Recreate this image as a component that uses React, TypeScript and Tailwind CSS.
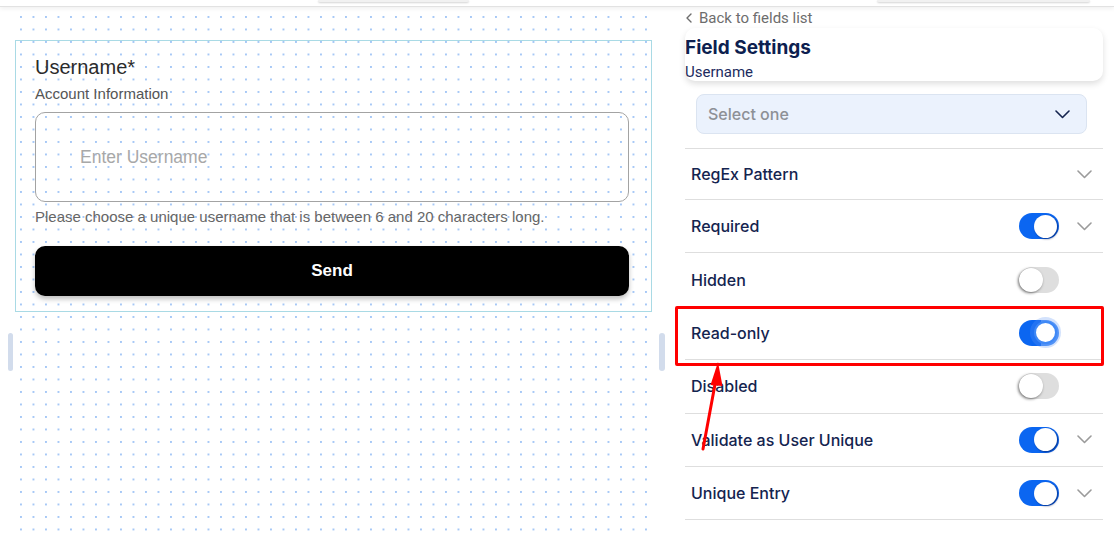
import type { ReactNode } from 'react';

type Row = {
  label: string;
  toggle?: 'on' | 'off' | 'focus';
  chevron?: boolean;
};

const rows: Row[] = [
  { label: 'RegEx Pattern', chevron: true },
  { label: 'Required', toggle: 'on', chevron: true },
  { label: 'Hidden', toggle: 'off' },
  { label: 'Read-only', toggle: 'focus' },
  { label: 'Disabled', toggle: 'off' },
  { label: 'Validate as User Unique', toggle: 'on', chevron: true },
  { label: 'Unique Entry', toggle: 'on', chevron: true },
];

function Chevron(props: { className?: string; color?: string }) {
  return (
    <svg
      width="15"
      height="9"
      viewBox="0 0 15 9"
      fill="none"
      className={props.className}
    >
      <polyline
        points="1,1 7.5,7.5 14,1"
        stroke={props.color ?? '#9b9b9b'}
        strokeWidth="1.6"
        strokeLinecap="round"
        strokeLinejoin="round"
      />
    </svg>
  );
}

function Toggle(props: { state: 'on' | 'off' | 'focus' }) {
  if (props.state === 'off') {
    return (
      <div className="flex h-[26px] w-[40px] items-center rounded-full bg-[#dedede]">
        <div className="h-[24px] w-[24px] rounded-full bg-white shadow-[-1px_1px_3px_rgba(0,0,0,0.55)]" />
      </div>
    );
  }
  if (props.state === 'focus') {
    return (
      <div className="flex h-[26px] w-[40px] items-center justify-end rounded-full bg-[linear-gradient(90deg,#0b66f1_55%,#4b91f7_55%)] pr-[2px]">
        <div className="h-[23px] w-[23px] rounded-full border-2 border-[#3e88f6] bg-white shadow-[0_0_0_4px_rgba(96,150,245,0.28)]" />
      </div>
    );
  }
  return (
    <div className="flex h-[26px] w-[40px] items-center justify-end rounded-full bg-[#0b66f1] pr-[2px]">
      <div className="h-[23px] w-[23px] rounded-full bg-white shadow-[1px_1px_2px_rgba(0,20,80,0.6)]" />
    </div>
  );
}

function SettingRow(props: { row: Row; first?: boolean }) {
  const { row } = props;
  return (
    <div
      className={`flex items-center border-b border-[#dedede] pl-[6px] pr-[11px] ${
        props.first ? 'h-[51px]' : 'h-[53.4px]'
      }`}
    >
      <span className="flex-1 text-[16px] font-medium text-[#14244f] [font-family:Inter,sans-serif]">
        {row.label}
      </span>
      {row.toggle && <Toggle state={row.toggle} />}
      <div className="ml-[18px] flex w-[15px] items-center">
        {row.chevron && <Chevron />}
      </div>
    </div>
  );
}

function TopPill(props: { className: string; children?: ReactNode }) {
  return (
    <div
      className={`h-[2px] rounded-b-[6px] bg-[#f1f1f1] shadow-[0_1px_2px_rgba(0,0,0,0.18)] ${props.className}`}
    >
      {props.children}
    </div>
  );
}

export default function App() {
  return (
    <div className="relative flex h-[541px] w-[1114px] flex-col overflow-hidden bg-white">
      {/* top bar */}
      <div className="relative z-10 flex h-[7px] shrink-0 items-start border-b border-[#e2e2e2] bg-white shadow-[0_2px_4px_rgba(0,0,0,0.06)]">
        <TopPill className="ml-[318px] w-[151px]" />
        <TopPill className="ml-[408px] w-[213px]" />
      </div>

      <div className="flex min-h-0 flex-1">
        {/* canvas */}
        <div className="relative w-[667px] shrink-0 bg-[radial-gradient(circle_at_1px_1px,#a6c8f6_0.8px,transparent_1.3px)] bg-[length:12.5px_12.5px] bg-clip-content bg-origin-content pl-[20px] pr-[17px] pt-[9px] [font-family:'Liberation_Sans',Arial,sans-serif]">
          <div className="-ml-[5px] mt-[24px] w-[637px] border border-[#a9dae5] pb-[15px] pl-[19px] pr-[22px] pt-[13px]">
            <div className="text-[20px] leading-[26px] text-[#2b2b2b]">
              Username*
            </div>
            <div className="mt-[4px] text-[15px] leading-[20px] text-[#555]">
              Account Information
            </div>
            <div className="mt-[8px] flex h-[90px] items-center rounded-[10px] border border-[#a3a3a3] pl-[44px] text-[17.5px] text-[#a8a8a8]">
              Enter Username
            </div>
            <div className="mt-[5px] text-[15px] leading-[20px] text-[#666]">
              Please choose a unique username that is between 6 and 20 characters long.
            </div>
            <button className="mt-[19px] flex h-[50px] w-full items-center justify-center rounded-[10px] bg-black text-[17px] font-bold text-white shadow-[0_3px_5px_rgba(0,0,0,0.25)]">
              Send
            </button>
          </div>

          <div className="absolute left-[8px] top-[326px] h-[38px] w-[5px] rounded-full bg-[#d2dcec]" />
          <div className="absolute left-[659px] top-[326px] h-[38px] w-[6px] rounded-full bg-[#d2dcec]" />
        </div>

        {/* settings panel */}
        <div className="flex-1 pl-[18px] pr-[11px]">
          <div className="mt-[1px] flex h-[20px] items-center gap-[7px] pl-[1px] text-[15px] text-[#6d6d6d] [font-family:Roboto,sans-serif]">
            <svg width="6" height="10" viewBox="0 0 6 10" fill="none">
              <polyline
                points="5,1 1,5 5,9"
                stroke="#6d6d6d"
                strokeWidth="1.4"
                strokeLinecap="round"
                strokeLinejoin="round"
              />
            </svg>
            Back to fields list
          </div>

          <div className="rounded-[10px] bg-white pb-[1px] pt-[8px] shadow-[0_3px_6px_rgba(0,0,0,0.13)]">
            <div className="text-[19px] font-bold leading-[24px] text-[#0d1f50] [font-family:Inter,sans-serif]">
              Field Settings
            </div>
            <div className="mt-[4px] text-[15px] leading-[16px] text-[#1c2b5e] [font-family:Roboto,sans-serif]">
              Username
            </div>
          </div>

          <div className="ml-[11px] mr-[16px] mt-[13px] flex h-[40px] items-center justify-between rounded-[8px] border border-[#dbe4f1] bg-[#ebf2fd] pl-[11px] pr-[16px]">
            <span className="text-[16px] font-medium text-[#8d9096] [font-family:Inter,sans-serif]">
              Select one
            </span>
            <Chevron color="#14244f" />
          </div>

          <div className="mt-[14px] border-t border-[#dedede]">
            {rows.map((row, i) => (
              <SettingRow key={row.label} row={row} first={i === 0} />
            ))}
          </div>
        </div>
      </div>

      {/* annotation */}
      <div className="absolute left-[675px] top-[306px] h-[60px] w-[429px] rounded-[2px] border-[3px] border-[#ff0000]" />
      <svg
        className="absolute left-[690px] top-[355px]"
        width="40"
        height="100"
        viewBox="0 0 40 100"
        fill="none"
      >
        <line x1="13" y1="94" x2="26" y2="24" stroke="#ff0000" strokeWidth="3" strokeLinecap="round" />
        <polygon points="28,7 20.5,30 32.5,31" fill="#ff0000" />
      </svg>
    </div>
  );
}
